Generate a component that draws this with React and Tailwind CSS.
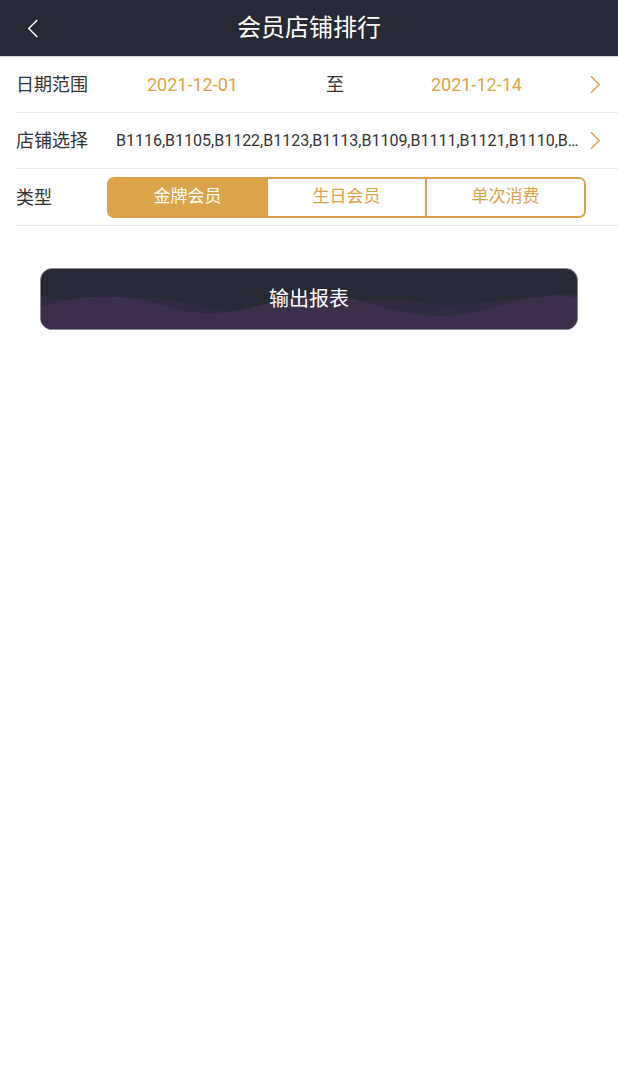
import React, { useState } from 'react';

const font = { fontFamily: 'Roboto, "Noto Sans CJK SC", sans-serif' };

const Chevron = ({ className }) => (
  <svg viewBox="0 0 12 20" className={className} fill="none" stroke="currentColor" strokeWidth="1.6" strokeLinecap="round" strokeLinejoin="round">
    <path d="M2 1.5 L10.5 10 L2 18.5" />
  </svg>
);

const BackIcon = () => (
  <svg viewBox="0 0 12 20" className="w-[12px] h-[19px] text-white" fill="none" stroke="currentColor" strokeWidth="1.6" strokeLinecap="round" strokeLinejoin="round">
    <path d="M10 1.5 L1.5 10 L10 18.5" />
  </svg>
);

const Waves = () => (
  <svg viewBox="0 0 540 62" preserveAspectRatio="none" className="absolute inset-0 w-full h-full">
    <path d="M0 28 C40 38 80 26 120 30 C170 36 200 56 250 48 C300 40 330 26 380 34 C430 44 470 26 540 26 L540 62 L0 62 Z" fill="#302b3f" />
    <path d="M0 40 C30 28 70 24 110 34 C150 46 170 50 210 40 C250 30 280 20 320 32 C360 46 400 54 440 44 C480 34 510 22 540 30 L540 62 L0 62 Z" fill="#3b2f4b" />
  </svg>
);

export default function App() {
  const [type, setType] = useState(0);
  const types = ['金牌会员', '生日会员', '单次消费'];

  return (
    <div className="min-h-screen bg-white" style={font}>
      {/* Header */}
      <div className="h-[57px] bg-[#272935] flex items-center border-b border-[#d6d6d6]">
        <div className="w-[56px] pl-[27px] flex items-center">
          <BackIcon />
        </div>
        <h1 className="flex-1 text-center text-white text-[24px] pr-[56px]">会员店铺排行</h1>
      </div>

      <div className="pl-4">
        {/* Date range */}
        <div className="h-[56px] flex items-center border-b border-[#e8e8e8] text-[18px]">
          <span className="w-[131px] text-[#333]">日期范围</span>
          <span className="w-[92px] text-[#dfa347]">2021-12-01</span>
          <span className="w-[192px] text-center text-[#333]">至</span>
          <span className="text-[#dfa347]">2021-12-14</span>
          <Chevron className="ml-auto mr-[17px] w-[12px] h-[19px] text-[#dfa347]" />
        </div>

        {/* Stores */}
        <div className="h-[56px] flex items-center border-b border-[#e8e8e8]">
          <span className="w-[100px] shrink-0 text-[18px] text-[#333]">店铺选择</span>
          <span className="flex-1 min-w-0 truncate text-[16px] text-[#333]">
            B1116,B1105,B1122,B1123,B1113,B1109,B1111,B1121,B1110,B1108,B1107
          </span>
          <Chevron className="shrink-0 ml-[4px] mr-[17px] w-[12px] h-[19px] text-[#dfa347]" />
        </div>

        {/* Type */}
        <div className="h-[57px] flex items-center border-b border-[#e8e8e8]">
          <span className="w-[91px] text-[18px] text-[#333]">类型</span>
          <div className="w-[479px] h-[41px] flex border-2 border-[#dca24a] rounded-[7px] overflow-hidden">
            {types.map((t, i) => (
              <button
                key={t}
                onClick={() => setType(i)}
                className={
                  'flex-1 text-[17px] ' +
                  (i > 0 ? 'border-l-2 border-[#dca24a] ' : '') +
                  (type === i ? 'bg-[#dba34a] text-white' : 'bg-white text-[#dca24a]')
                }
              >
                {t}
              </button>
            ))}
          </div>
        </div>
      </div>

      {/* Export button */}
      <div className="px-[40px] pt-[42px]">
        <button className="relative w-full h-[62px] rounded-[12px] bg-[#272935] overflow-hidden border border-[#8a8794]">
          <Waves />
          <span className="relative text-white text-[20px]">输出报表</span>
        </button>
      </div>
    </div>
  );
}
